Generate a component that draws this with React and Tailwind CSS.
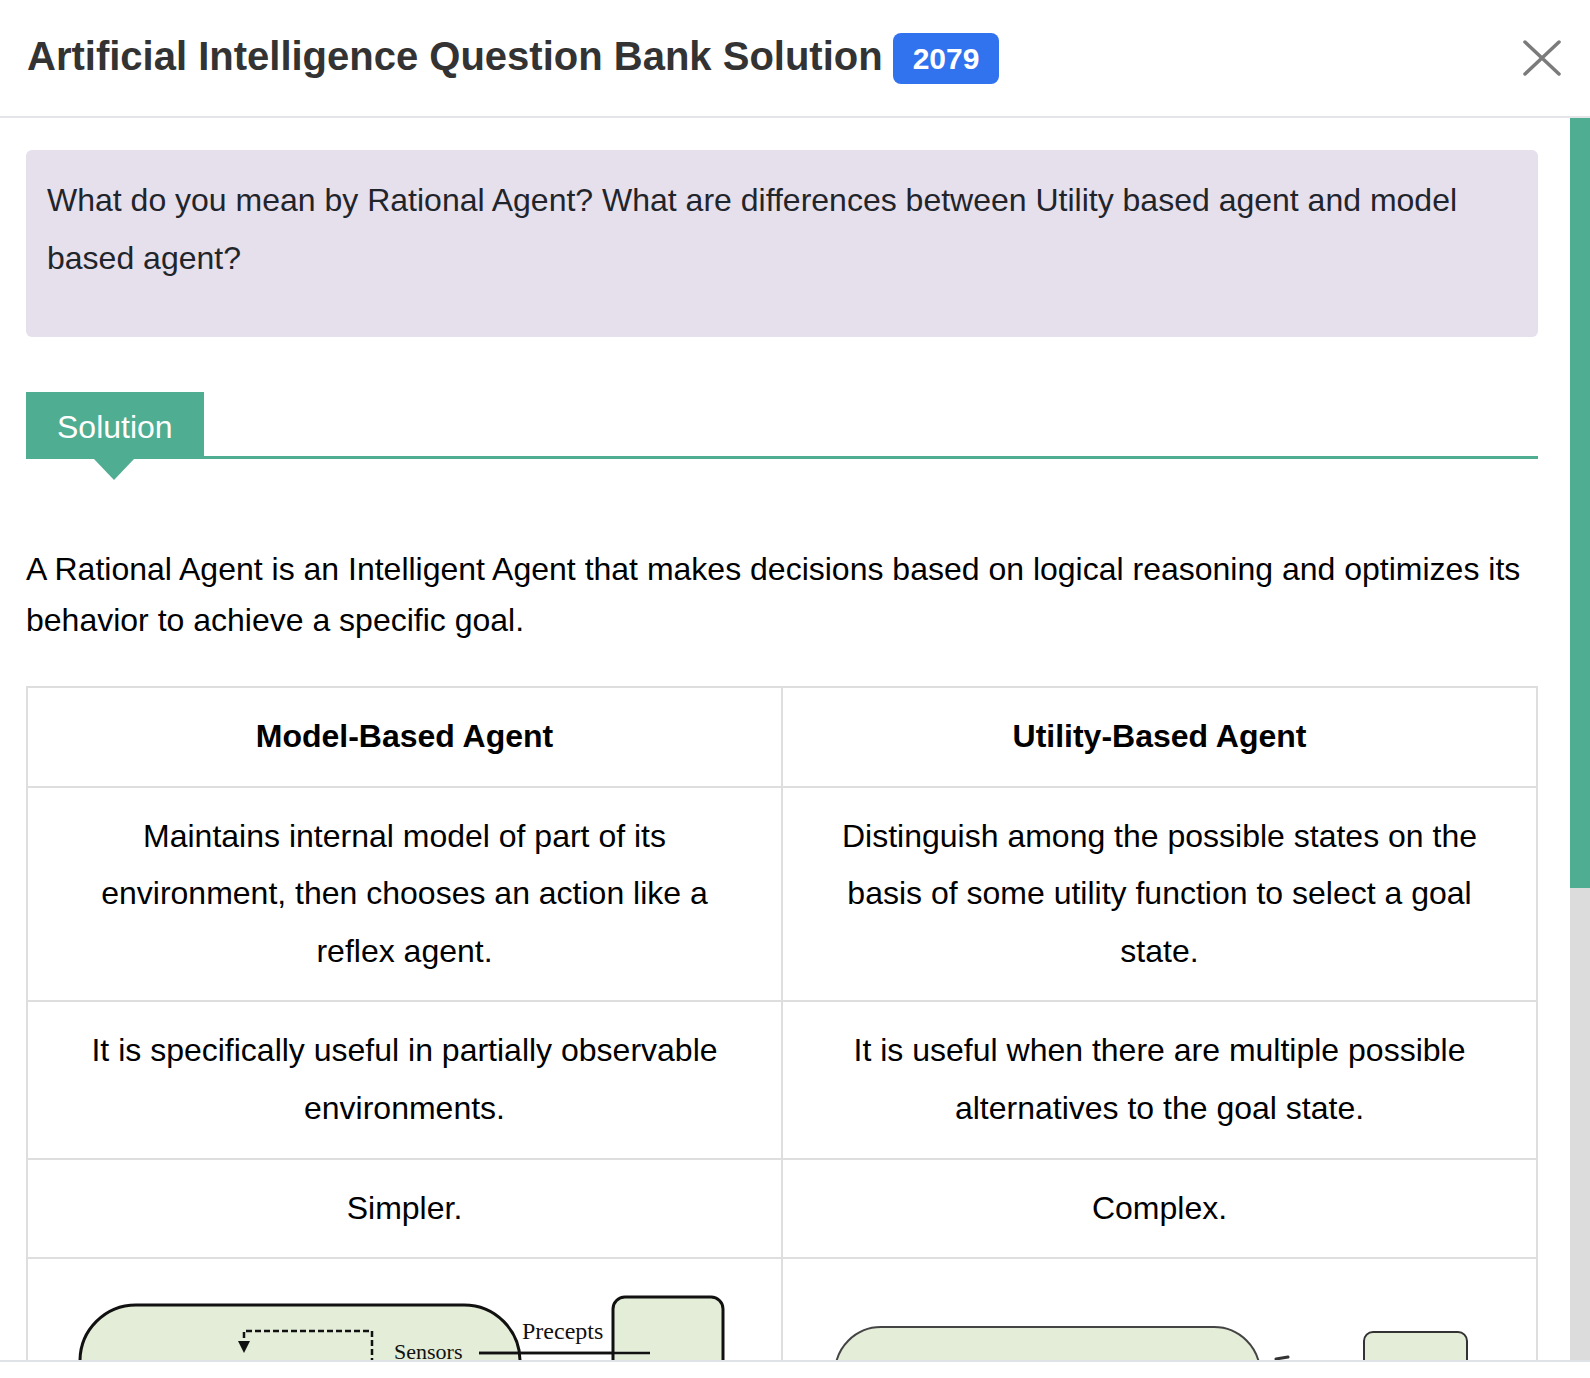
import React from "react";

const rows = [
  [
    "Maintains internal model of part of its environment, then chooses an action like a reflex agent.",
    "Distinguish among the possible states on the basis of some utility function to select a goal state.",
  ],
  [
    "It is specifically useful in partially observable environments.",
    "It is useful when there are multiple possible alternatives to the goal state.",
  ],
  ["Simpler.", "Complex."],
];

function ModelDiagram() {
  return (
    <svg width="694" height="200" className="block">
      <rect x="22" y="26" width="440" height="400" rx="56" fill="#e4edd8" stroke="#111" strokeWidth="3" />
      <path d="M186 68 V52 H314 V200" fill="none" stroke="#111" strokeWidth="2.5" strokeDasharray="6 3" />
      <path d="M180 62 L192 62 L186 74 Z" fill="#111" />
      <text x="336" y="80" fontSize="22" fontFamily="'Liberation Serif', serif" fill="#111">
        Sensors
      </text>
      <line x1="421" y1="74" x2="592" y2="74" stroke="#111" strokeWidth="2.5" />
      <rect x="555" y="18" width="110" height="300" rx="12" fill="#e4edd8" stroke="#111" strokeWidth="3" />
      <line x1="421" y1="74" x2="592" y2="74" stroke="#111" strokeWidth="2.5" />
      <text x="464" y="60" fontSize="24" fontFamily="'Liberation Serif', serif" fill="#111">
        Precepts
      </text>
    </svg>
  );
}

function UtilityDiagram() {
  return (
    <svg width="694" height="200" className="block">
      <rect x="22" y="48" width="425" height="400" rx="46" fill="#e4edd8" stroke="#444" strokeWidth="2" />
      <path d="M463 80 L475 78" stroke="#333" strokeWidth="3" strokeLinecap="round" />
      <rect x="551" y="53" width="103" height="300" rx="9" fill="#e4edd8" stroke="#333" strokeWidth="2" />
    </svg>
  );
}

export default function App() {
  return (
    <div className="h-[1378px] w-full flex flex-col bg-white font-['Liberation_Sans',Arial,sans-serif] overflow-hidden">
      {/* header */}
      <div className="h-[118px] shrink-0 flex items-center pl-[27px] pr-[28px] border-b-2 border-[#e3e5e8]">
        <h1 className="text-[40px] font-bold text-[#333] leading-none -mt-[4px]">
          Artificial Intelligence Question Bank Solution
        </h1>
        <span className="ml-[10px] h-[51px] px-[20px] flex items-center rounded-lg bg-[#3172ef] text-white text-[30px] font-bold">
          2079
        </span>
        <button className="ml-auto">
          <svg width="40" height="38" viewBox="0 0 40 38">
            <path d="M3 3 L37 35 M37 3 L3 35" stroke="#7b7b7b" strokeWidth="3.5" strokeLinecap="round" />
          </svg>
        </button>
      </div>

      {/* body */}
      <div className="flex-1 flex min-h-0">
        <div className="flex-1 overflow-hidden pl-[26px] pr-[32px] pt-[32px]">
          <div className="rounded-md bg-[#e6dfec] pl-[21px] pr-[21px] pt-[21px] pb-[50px] text-[32px] leading-[58px] text-[#1f252b]">
            What do you mean by Rational Agent? What are differences between Utility based agent and model based
            agent?
          </div>

          <div className="mt-[55px] flex items-end">
            <div className="relative h-[67px] px-[31px] pt-[2px] flex items-center bg-[#4fad91] text-white text-[32px]">
              Solution
              <div className="absolute top-full left-[68px] w-0 h-0 border-l-[20px] border-r-[20px] border-t-[21px] border-l-transparent border-r-transparent border-t-[#4fad91]" />
            </div>
            <div className="flex-1 h-[3px] bg-[#4fad91]" />
          </div>

          <p className="mt-[85px] text-[32px] leading-[51px] text-black">
            A Rational Agent is an Intelligent Agent that makes decisions based on logical reasoning and optimizes its
            behavior to achieve a specific goal.
          </p>

          <table className="mt-[40px] w-full table-fixed border-collapse text-[32px] leading-[57.6px] text-black text-center">
            <thead>
              <tr>
                <th className="border-2 border-[#dedede] px-[30px] py-[20px] font-bold">Model-Based Agent</th>
                <th className="border-2 border-[#dedede] px-[30px] py-[20px] font-bold">Utility-Based Agent</th>
              </tr>
            </thead>
            <tbody>
              {rows.map((r, i) => (
                <tr key={i}>
                  <td className="border-2 border-[#dedede] px-[30px] py-[20px]">{r[0]}</td>
                  <td className="border-2 border-[#dedede] px-[30px] py-[20px]">{r[1]}</td>
                </tr>
              ))}
              <tr>
                <td className="border-2 border-[#dedede] px-[30px] py-[20px] align-top">
                  <ModelDiagram />
                </td>
                <td className="border-2 border-[#dedede] px-[30px] py-[20px] align-top">
                  <UtilityDiagram />
                </td>
              </tr>
            </tbody>
          </table>
        </div>

        {/* scrollbar */}
        <div className="w-[20px] shrink-0 flex flex-col bg-[#dcdcdc]">
          <div className="h-[770px] bg-[#4fad91]" />
        </div>
      </div>

      <div className="h-[18px] shrink-0 border-t-2 border-[#dfe3e8] bg-white" />
    </div>
  );
}
